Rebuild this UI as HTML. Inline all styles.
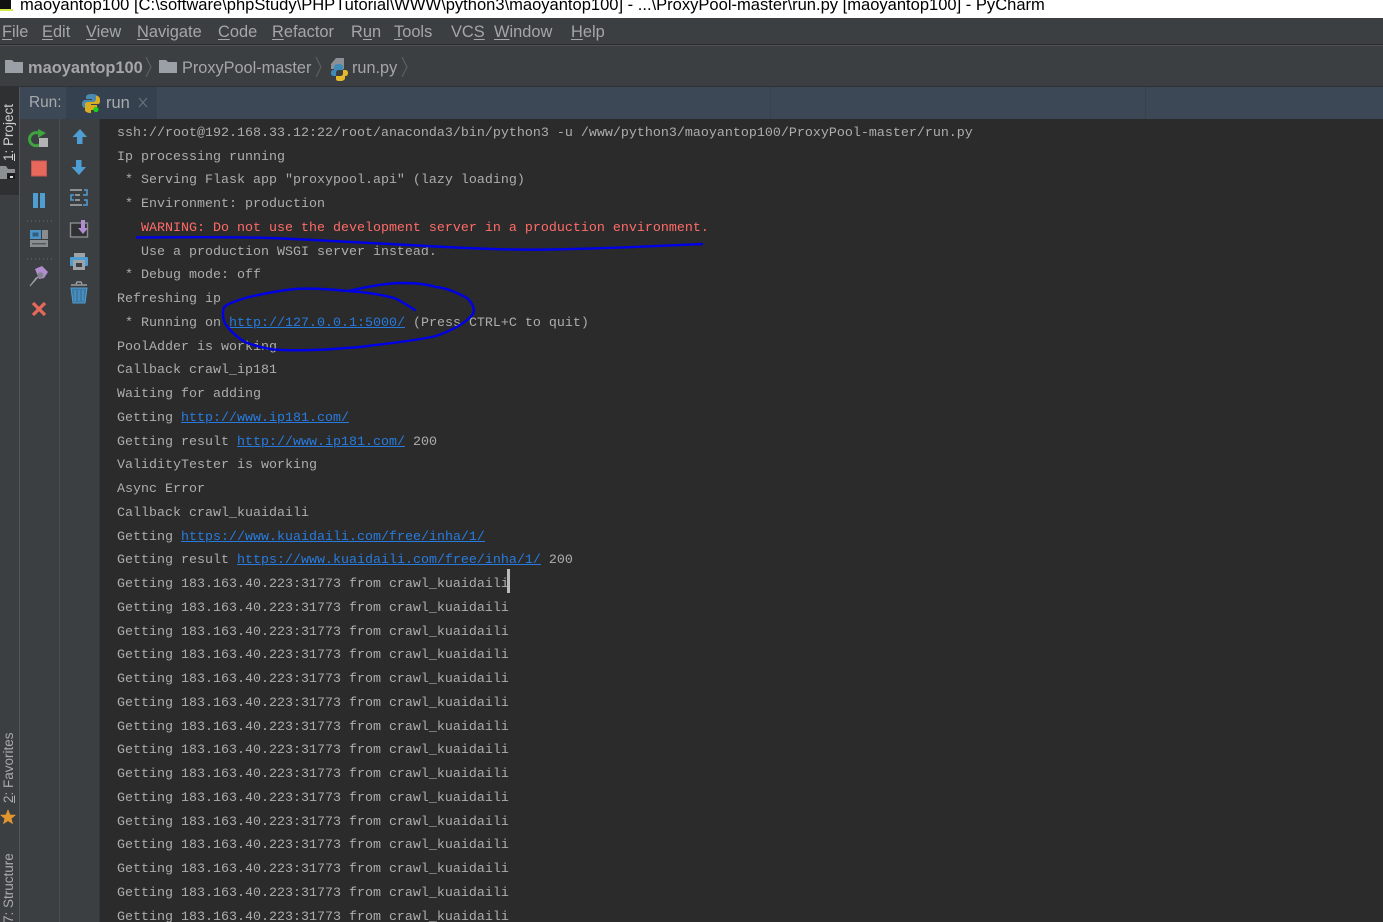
<!DOCTYPE html>
<html><head><meta charset="utf-8"><title>PyCharm</title>
<style>
html,body{margin:0;padding:0;background:#2b2b2b}
#p{position:relative;width:1383px;height:922px;overflow:hidden;background:#2b2b2b;font-family:"Liberation Sans",sans-serif}
.a{position:absolute}
#title{left:0;top:0;width:1383px;height:18px;background:#fff;overflow:hidden}
#title span{position:absolute;left:20px;top:-5px;font-size:16.55px;line-height:20px;color:#000;white-space:nowrap}
#menu{left:0;top:18px;width:1383px;height:26px;background:#3c3f41}
#menu span{position:absolute;top:4px;font-size:16.4px;line-height:20px;color:#a4a6a8;white-space:nowrap}
#menu u{text-underline-offset:2px}
.nav{position:absolute;font-size:16.3px;line-height:20px;color:#a4a6a8;white-space:nowrap}
.ln{position:absolute;left:117px;margin-top:2px;font:13.33px/18px "Liberation Mono",monospace;color:#adadad;white-space:pre}
.ln a{color:#287bde;text-decoration:underline}
.r{color:#ff6b68}
.v{position:absolute;left:9px;font-size:13.5px;line-height:16px;color:#a8aaac;white-space:nowrap;transform-origin:0 0;transform:rotate(-90deg) translateY(-8px)}
</style></head><body><div id="p">
<div class="a" id="title"><span>maoyantop100 [C:\software\phpStudy\PHPTutorial\WWW\python3\maoyantop100] - ...\ProxyPool-master\run.py [maoyantop100] - PyCharm</span>
<svg class="a" style="left:0;top:0" width="14" height="12"><rect x="0" y="0" width="11" height="9" fill="#111"/><rect x="0" y="9" width="13" height="2" fill="#d8e84a"/></svg></div>
<div class="a" id="menu">
<span style="left:2px"><u>F</u>ile</span><span style="left:42px"><u>E</u>dit</span><span style="left:86px"><u>V</u>iew</span><span style="left:137px"><u>N</u>avigate</span><span style="left:218px"><u>C</u>ode</span><span style="left:272px"><u>R</u>efactor</span><span style="left:351px">R<u>u</u>n</span><span style="left:394px"><u>T</u>ools</span><span style="left:451px">VC<u>S</u></span><span style="left:494px"><u>W</u>indow</span><span style="left:571px"><u>H</u>elp</span>
</div>
<div class="a" style="left:0;top:44px;width:1383px;height:1px;background:#2b2b2b"></div>
<div class="a" style="left:0;top:45px;width:1383px;height:1px;background:#515151"></div>
<div class="a" style="left:0;top:46px;width:1383px;height:40px;background:#3c3f41"></div>
<div class="a" style="left:0;top:86px;width:1383px;height:1px;background:#2f3133"></div>
<svg class="a" style="left:0;top:46px" width="420" height="40">
<path d="M5 14h7l2 2h9v11H5z" fill="#9ba0a6"/>
<path d="M159 14h7l2 2h9v11h-18z" fill="#9ba0a6"/>
<path d="M146 11l5 10-5 10M316 11l5 10-5 10M402 11l5 10-5 10" fill="none" stroke="#5c5f61" stroke-width="1.2"/>
<path d="M331 18l5-6h8v11h-13z" fill="#8b9096"/>
<path d="M339 18c-3 0-5 1-5 3v3h-1c-2 0-2 3-2 3 0 2 1 3 3 3h2v-3c0-2 1-3 3-3h4v-4c0-1-2-2-4-2z" fill="#3f8bb7"/>
<path d="M340 35c3 0 5-1 5-3v-2h1c2 0 2-3 2-3 0-2-1-3-3-3h-2v3c0 2-1 3-3 3h-4v3c0 2 2 2 4 2z" fill="#e5b92c"/>
</svg>
<div class="nav" style="left:28px;top:58px;font-weight:bold;font-size:16.4px">maoyantop100</div>
<div class="nav" style="left:182px;top:58px">ProxyPool-master</div>
<div class="nav" style="left:352px;top:58px">run.py</div>

<div class="a" style="left:0;top:87px;width:1383px;height:32px;background:#3d4856"></div>
<div class="a" style="left:0;top:87px;width:20px;height:32px;background:#3c3f41"></div>
<div class="a" style="left:66px;top:87px;width:91px;height:32px;background:#35414e"></div>
<div class="a" style="left:770px;top:87px;width:1px;height:32px;background:#37424f"></div>
<div class="a" style="left:1145px;top:87px;width:1px;height:32px;background:#37424f"></div>
<div class="nav" style="left:29px;top:93px;font-size:15.4px;color:#a8aaac">Run:</div>
<div class="nav" style="left:106px;top:93px;font-size:16.5px;color:#a8aaac">run</div>
<svg class="a" style="left:80px;top:92px" width="72" height="24">
<path d="M10 2c-4 0-6 1-6 3v2h6v1H3c-2 0-3 2-3 4s1 4 3 4h2v-3c0-2 2-3 3-3h5c1 0 3-1 3-2V5c0-2-3-3-6-3z" fill="#4a8ab0" transform="translate(2,0)"/>
<path d="M11 18c4 0 6-1 6-3v-2h-6v-1h7c2 0 2-2 2-4s-1-4-3-4h-1v3c0 2-2 3-3 3H8c-1 0-3 1-3 2v6c0 2 3 3 6 3z" fill="#d9ad22"/>
<circle cx="16" cy="17.5" r="2.6" fill="#19d219"/>
<path d="M59 6l8 9M67 6l-8 9" stroke="#6b7078" stroke-width="1.2" fill="none"/>
</svg>

<div class="a" style="left:0;top:87px;width:19px;height:835px;background:#3c3f41"></div>
<div class="a" style="left:0;top:87px;width:19px;height:108px;background:#2e3032"></div>
<div class="a" style="left:19px;top:87px;width:1px;height:835px;background:#55585a"></div>
<div class="a" style="left:20px;top:119px;width:80px;height:803px;background:#3c3f41"></div>
<div class="a" style="left:59px;top:119px;width:1px;height:803px;background:#4b4e50"></div>
<div class="a" style="left:99px;top:119px;width:1px;height:803px;background:#333537"></div>

<div class="v" style="top:161px;color:#d0d0d0"><u>1</u>: Project</div>
<div class="v" style="top:803px"><u>2</u>: Favorites</div>
<div class="v" style="top:922px"><span style="margin-left:-1px">7: Structure</span></div>

<svg class="a" style="left:0;top:119px" width="100" height="210">
<path d="M0 47h6l2 3h7v4H9v6H0z" fill="#8d9093"/><rect x="7" y="54" width="8" height="6" fill="#1c1c1c"/><rect x="10" y="57" width="3" height="2" fill="#ddd"/>
<path d="M38 14a6.500 6.500 0 1 0 1 12" fill="none" stroke="#3fa33f" stroke-width="3"/><path d="M38 10l8 4-8 5z" fill="#3fa33f"/><rect x="39" y="19" width="9" height="9" fill="#b3b3b3"/>
<rect x="31.500" y="42" width="15" height="15" fill="#e8695c" stroke="#c75450"/>
<rect x="33" y="74" width="5" height="15" fill="#4f9ed3"/><rect x="40" y="74" width="5" height="15" fill="#4f9ed3"/>
<path d="M27 102h27M27 140h27" stroke="#6f7274" stroke-dasharray="1 3"/>
<rect x="30" y="111" width="11" height="9" fill="#4d94c6"/><rect x="32.500" y="113.500" width="6" height="4" fill="#2e5f80"/>
<rect x="42" y="111" width="6" height="9" fill="#8a8d90"/><rect x="30" y="121" width="18" height="7" fill="#8a8d90"/><rect x="32" y="124" width="14" height="1.500" fill="#55585a"/>
<path d="M35 150l7-3 6 6-4 6-5 1z" fill="#b18dcf"/><circle cx="40.500" cy="156" r="2.800" fill="#80848a"/><path d="M38 158l-8 9 6-8z" fill="#a0a3a6" stroke="#a0a3a6"/>
<path d="M33 184l12 12M45 184l-12 12" stroke="#e8695c" stroke-width="3.200"/>
<path d="M80 10l7 8h-4.500v7h-5.500v-7h-4.500z" fill="#4f9ed3"/>
<path d="M79 56l7-8h-4.500v-7H76v7h-4.500z" fill="#4f9ed3"/>
<g fill="none" stroke="#9a9da0" stroke-width="1.800"><path d="M70 71h12M75 76h5M70 86h12M75 81h5"/></g><g fill="none" stroke="#4f9ed3" stroke-width="1.500"><path d="M84 71h3v5h-4M74 76h-3v5h3M84 81h3v5h-4"/></g>
<rect x="70.500" y="104" width="17" height="14" fill="#2f3133" stroke="#8a8d90" stroke-width="1.400"/><path d="M81 101h4v8h3l-5 6-5-6h3z" fill="#b18dcf"/>
<rect x="74" y="134" width="11" height="6" fill="#a0a3a6"/><rect x="70" y="138" width="18" height="9" rx="1" fill="#4f9ed3"/><rect x="73" y="141" width="12" height="10" fill="#a0a3a6"/><rect x="76" y="144" width="6" height="4" fill="#3c3f41"/>
<path d="M71 169l2 15h12l2-15z" fill="#3d7ba5" stroke="#4f9ed3"/><path d="M71 166h16M76 165l1-2h4l1 2" stroke="#9a9da0" stroke-width="1.500" fill="none"/><path d="M75 171v11M79 171v11M83 171v11" stroke="#4f9ed3"/>
</svg>
<svg class="a" style="left:0;top:806px" width="18" height="22"><path d="M8 3l2.200 5.600 5.800 .3-4.500 3.700 1.500 5.700L8 15.100 3 18.300l1.500-5.700L0 8.900l5.800-.3z" fill="#e0952d"/></svg>

<div id="c">
<div class="ln" style="top:123px">ssh://root@192.168.33.12:22/root/anaconda3/bin/python3 -u /www/python3/maoyantop100/ProxyPool-master/run.py</div>
<div class="ln" style="top:147px">Ip processing running</div>
<div class="ln" style="top:170px"> * Serving Flask app "proxypool.api" (lazy loading)</div>
<div class="ln" style="top:194px"> * Environment: production</div>
<div class="ln r" style="top:218px">   WARNING: Do not use the development server in a production environment.</div>
<div class="ln" style="top:242px">   Use a production WSGI server instead.</div>
<div class="ln" style="top:265px"> * Debug mode: off</div>
<div class="ln" style="top:289px">Refreshing ip</div>
<div class="ln" style="top:313px"> * Running on <a>http://127.0.0.1:5000/</a> (Press CTRL+C to quit)</div>
<div class="ln" style="top:337px">PoolAdder is working</div>
<div class="ln" style="top:360px">Callback crawl_ip181</div>
<div class="ln" style="top:384px">Waiting for adding</div>
<div class="ln" style="top:408px">Getting <a>http://www.ip181.com/</a></div>
<div class="ln" style="top:432px">Getting result <a>http://www.ip181.com/</a> 200</div>
<div class="ln" style="top:455px">ValidityTester is working</div>
<div class="ln" style="top:479px">Async Error</div>
<div class="ln" style="top:503px">Callback crawl_kuaidaili</div>
<div class="ln" style="top:527px">Getting <a>https://www.kuaidaili.com/free/inha/1/</a></div>
<div class="ln" style="top:550px">Getting result <a>https://www.kuaidaili.com/free/inha/1/</a> 200</div>
<div class="ln" style="top:574px">Getting 183.163.40.223:31773 from crawl_kuaidaili</div>
<div class="ln" style="top:598px">Getting 183.163.40.223:31773 from crawl_kuaidaili</div>
<div class="ln" style="top:622px">Getting 183.163.40.223:31773 from crawl_kuaidaili</div>
<div class="ln" style="top:645px">Getting 183.163.40.223:31773 from crawl_kuaidaili</div>
<div class="ln" style="top:669px">Getting 183.163.40.223:31773 from crawl_kuaidaili</div>
<div class="ln" style="top:693px">Getting 183.163.40.223:31773 from crawl_kuaidaili</div>
<div class="ln" style="top:717px">Getting 183.163.40.223:31773 from crawl_kuaidaili</div>
<div class="ln" style="top:740px">Getting 183.163.40.223:31773 from crawl_kuaidaili</div>
<div class="ln" style="top:764px">Getting 183.163.40.223:31773 from crawl_kuaidaili</div>
<div class="ln" style="top:788px">Getting 183.163.40.223:31773 from crawl_kuaidaili</div>
<div class="ln" style="top:812px">Getting 183.163.40.223:31773 from crawl_kuaidaili</div>
<div class="ln" style="top:835px">Getting 183.163.40.223:31773 from crawl_kuaidaili</div>
<div class="ln" style="top:859px">Getting 183.163.40.223:31773 from crawl_kuaidaili</div>
<div class="ln" style="top:883px">Getting 183.163.40.223:31773 from crawl_kuaidaili</div>
<div class="ln" style="top:907px">Getting 183.163.40.223:31773 from crawl_kuaidaili</div>
</div>
<div class="a" style="left:507px;top:569px;width:3px;height:24px;background:#bbb"></div>
<svg class="a" style="left:0;top:0" width="1383" height="922" fill="none" stroke="#0000e6" stroke-width="2.4" stroke-linecap="round" stroke-linejoin="round">
<path d="M137 237.500C190 237 250 237 283 238.500C340 241 400 245 436 246.500C480 249 520 250 551 249.500C610 248.500 660 246 702 244"/>
<path d="M415 310C408 306 402 301 394 298C380 294 362 292 348 291C328 289 310 288 295 289C275 291 258 295 249 297C238 300 229 303 224 307C222 314 223 320 226 325C232 333 238 338 245 342C258 347 270 350 283 350C310 351 335 349 360 347C390 343 415 341 436 336C450 331 460 326 467 320C472 316 474 313 474 310C473 304 470 301 467 298C458 293 447 288 436 287C422 283 410 283 398 283C380 284 362 288 348 291"/>
</svg>
</div></body></html>
